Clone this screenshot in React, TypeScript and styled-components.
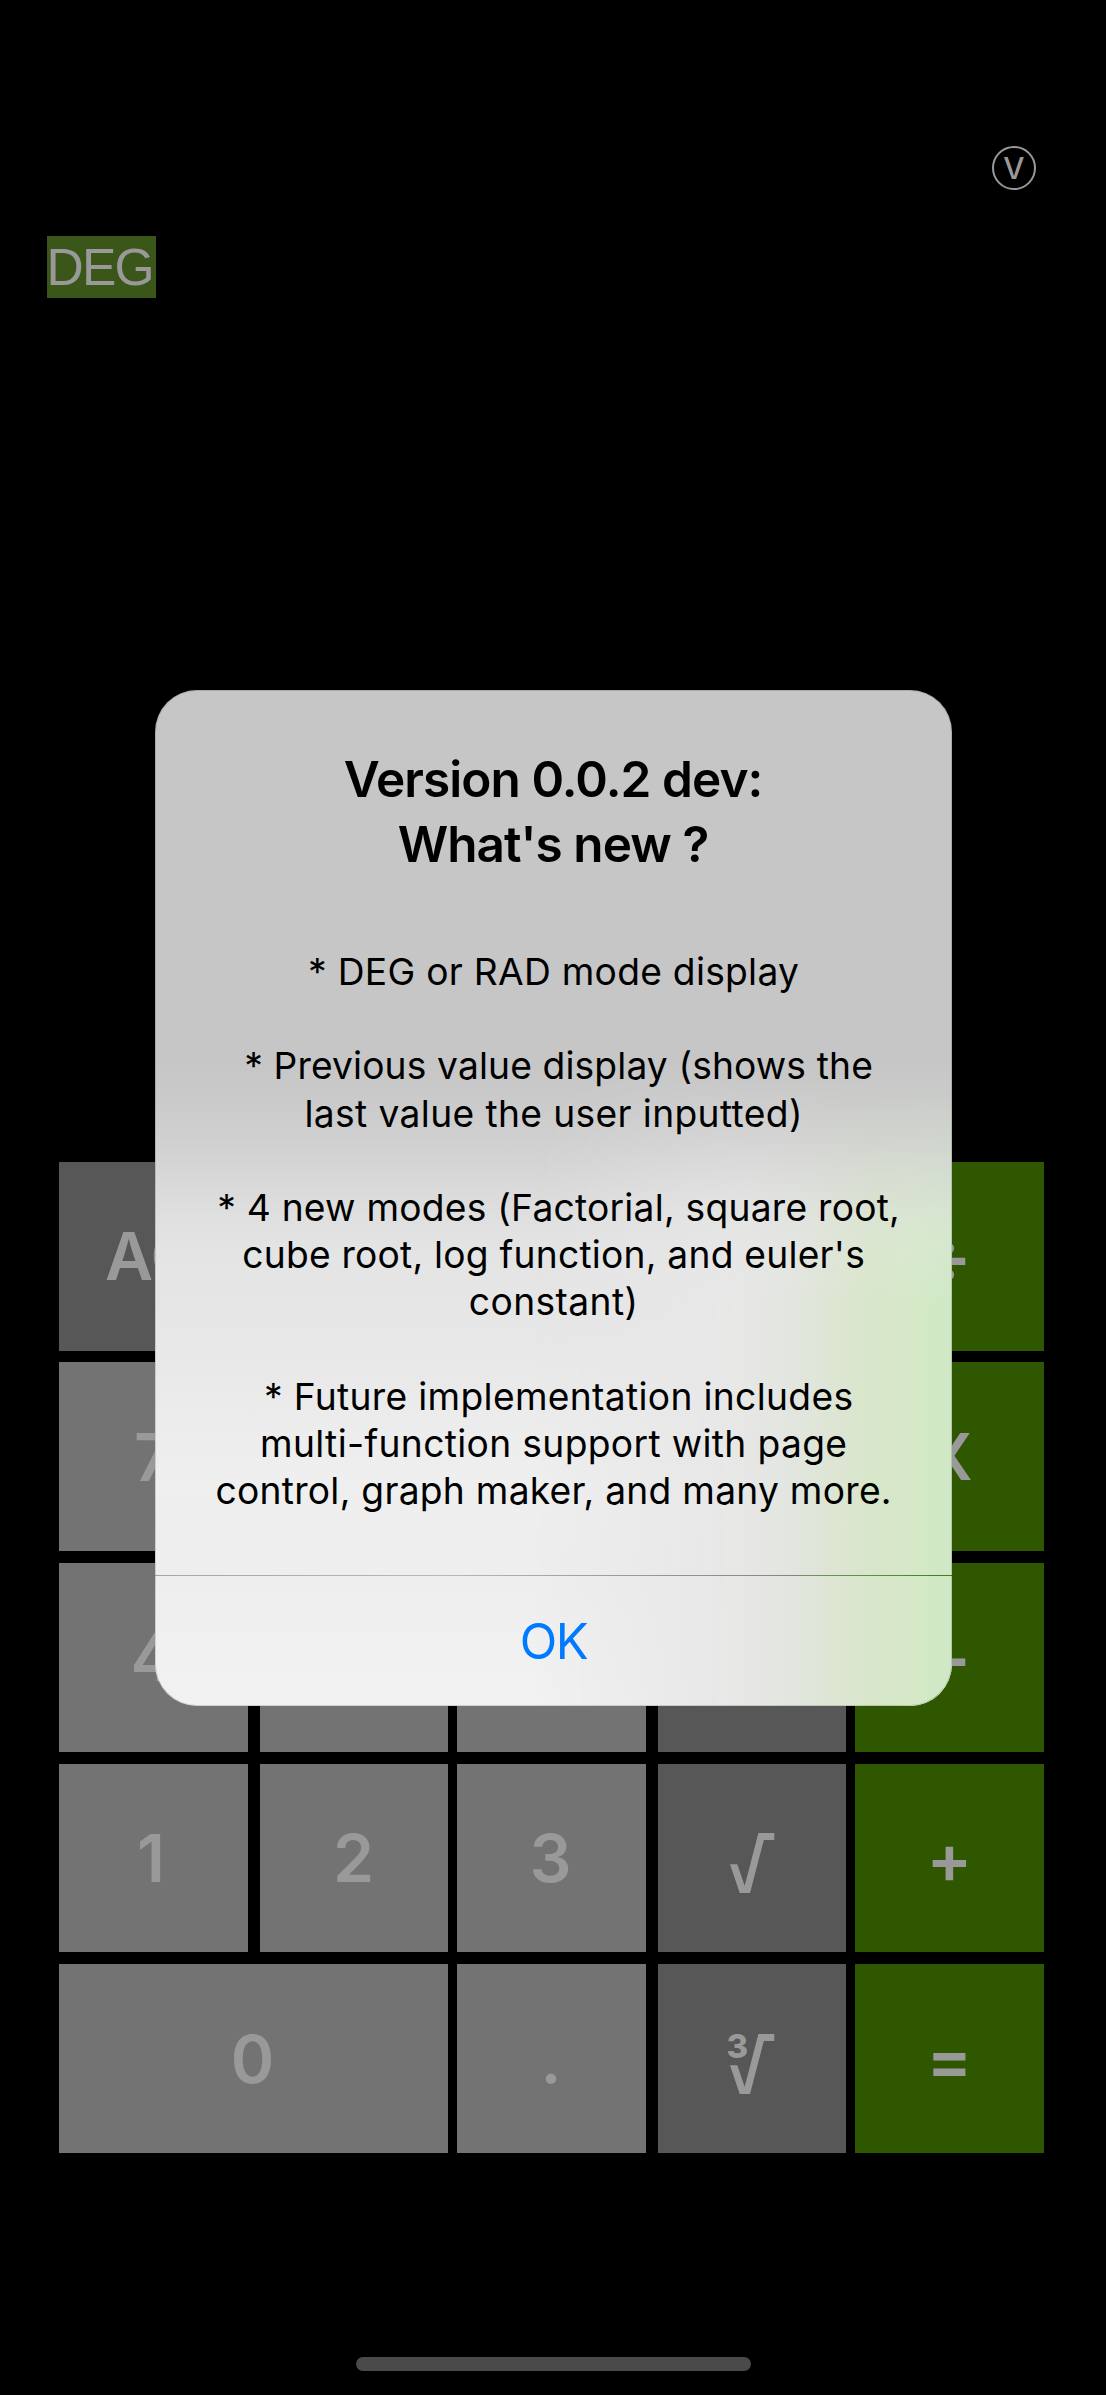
import React from "react";
import styled, { createGlobalStyle } from "styled-components";

const GlobalStyle = createGlobalStyle`
  * { box-sizing: border-box; }
  body { margin: 0; background: #000; }
`;

const Screen = styled.main`
  position: relative;
  display: flex;
  flex-direction: column;
  width: 1106px;
  height: 2395px;
  overflow: hidden;
  background: #000;
  color: #999;
  font-family: Inter, Roboto, sans-serif;
`;

const TopBar = styled.header`
  display: flex;
  justify-content: flex-end;
  padding: 146px 70px 0 0;
`;

const VersionBadge = styled.button`
  display: flex;
  align-items: center;
  justify-content: center;
  width: 44px;
  height: 44px;
  padding: 0;
  border: 2px solid #999;
  border-radius: 50%;
  background: none;
  color: inherit;
  font: 500 30px/40px Inter, sans-serif;
`;

const Display = styled.section`
  flex: 1;
  padding: 46px 47px 0;
`;

const AngleMode = styled.div`
  width: 109px;
  height: 62px;
  background: #3a5719;
  font: 400 51.5px/62px "Liberation Sans", Arial, sans-serif;
  letter-spacing: -1.8px;
  text-indent: -0.5px;
  white-space: nowrap;
`;

const Keypad = styled.section`
  display: grid;
  grid-template-columns: 189px 188px 189px 188px 189px;
  grid-auto-rows: 188.8px;
  row-gap: 11.8px;
  margin-left: 59px;
`;

const Row = styled.div`
  display: flex;
  grid-column: 1 / -1;
  gap: 9px;
`;

const Pair = styled.div`
  display: flex;
  gap: 12px;
  width: 389px;
  flex: none;

  & > :last-child:not(:first-child) { width: 188px; }
`;

type Tone = "digit" | "func" | "op";
const tones: Record<Tone, string> = { digit: "#737373", func: "#575757", op: "#2f5700" };

const Key = styled.button<{ $tone: Tone; $size?: number; $wide?: boolean; $nudge?: number }>`
  display: flex;
  flex: none;
  align-items: center;
  justify-content: center;
  width: ${(p) => (p.$wide ? "389px" : "189px")};
  height: 188.8px;
  padding: 0 ${(p) => p.$nudge ?? 1}px 0 0;
  border: 0;
  border-radius: 0;
  background: ${(p) => tones[p.$tone]};
  color: #999;
  font: 600 ${(p) => p.$size ?? 66}px Inter, sans-serif;
`;

const RadicalBox = styled.span`
  position: relative;
  display: block;
  width: 45px;
  height: 60px;
  margin-top: 10px;

  svg { display: block; }
`;

const RootIndex = styled.span`
  position: absolute;
  left: -3px;
  top: -6px;
  font-size: 33px;
  font-weight: 800;
  line-height: 36px;
`;

const HomeIndicator = styled.div`
  flex: none;
  width: 395px;
  height: 14px;
  margin: 204px 0 24px 356px;
  border-radius: 7px;
  background: #4a4a4a;
`;

const Alert = styled.section`
  position: absolute;
  left: 155px;
  top: 690px;
  display: flex;
  flex-direction: column;
  width: 797px;
  height: 1016px;
  overflow: hidden;
  border-radius: 42px;
  background: linear-gradient(
    180deg,
    #c6c6c6 0,
    #c6c6c6 370px,
    #cacaca 410px,
    #d0d0d0 450px,
    #d8d8d8 490px,
    #dfdfdf 525px,
    #e4e4e4 560px,
    #e6e6e6 610px,
    #e8e8e8 670px,
    #ececec 730px,
    #efefef 790px,
    #eeeeee 870px,
    #f2f2f2 1016px
  );
  color: #000;
  text-align: center;

  &::before,
  &::after {
    content: "";
    position: absolute;
    inset: 0;
    pointer-events: none;
  }

  &::before {
    background: linear-gradient(
      90deg,
      rgba(230, 230, 230, 0) 380px,
      rgba(231, 231, 231, 0.9) 550px,
      #e7e7e6 590px,
      #e2e6df 640px,
      #dde5d3 680px,
      #d7e6c8 720px,
      #d6e8c8 748px,
      #d2e9c6 772px,
      #d0e8c6 797px
    );
    mask-image: linear-gradient(180deg, transparent 380px, rgba(0, 0, 0, 0.25) 460px, rgba(0, 0, 0, 0.6) 525px, #000 610px);
  }

  &::after {
    border-radius: inherit;
    box-shadow: inset 0 0 0 1px rgba(0, 0, 0, 0.14);
  }
`;

const AlertBody = styled.div`
  position: relative;
  display: flex;
  flex-direction: column;
  height: 885px;
  padding-top: 56.5px;
`;

/* A first line of a wrapped note sits slightly right of centre. */
const Line = styled.span<{ $tracking: number; $shift: number }>`
  display: block;
  padding-left: ${(p) => p.$shift * 2}px;
  letter-spacing: ${(p) => p.$tracking}px;
  margin-right: ${(p) => -p.$tracking}px;
  white-space: pre;
`;

const AlertTitle = styled.h1`
  margin: 0;
  font-size: 49.5px;
  font-weight: 600;
  line-height: 65px;
`;

const Message = styled.div`
  display: flex;
  flex-direction: column;
  gap: 47.2px;
  margin-top: 71.6px;
  font-size: 37.2px;
  line-height: 47.2px;
`;

const Note = styled.p`
  margin: 0;
`;

const AlertAction = styled.button`
  position: relative;
  flex: 1;
  padding: 1px 0 0;
  border: 0;
  border-top: 1px solid;
  border-image: linear-gradient(90deg, #a6a6a6, #b8b8b8 36%, #999 60%, #888b84 76%, #5c9345 89%, #35821a) 1;
  background: none;
  color: #007aff;
  font: 400 49px Inter, sans-serif;
  letter-spacing: -1.5px;
`;

const Radical = ({ index }: { index?: string }) => (
  <RadicalBox>
    <svg width="45" height="60" viewBox="0 0 45 60" fill="none">
      <clipPath id="radicalTrim">
        <path d="M0 31.3H16L22 0H45V60H0Z" />
      </clipPath>
      <path
        d="M2.4 27.5L15.1 65L31.1 3.5H44.3"
        stroke="#999"
        strokeWidth="7"
        strokeMiterlimit="12"
        clipPath="url(#radicalTrim)"
      />
    </svg>
    {index && <RootIndex>{index}</RootIndex>}
  </RadicalBox>
);

type TextLine = [text: string, tracking: number, shift?: number];

const title: TextLine[] = [
  ["Version 0.0.2 dev:", -0.92],
  ["What's new ?", -0.93],
];

const notes: TextLine[][] = [
  [["* DEG or RAD mode display", 0.27]],
  [
    ["* Previous value display (shows the", 0.13, 5],
    ["last value the user inputted)", 0.37],
  ],
  [
    ["* 4 new modes (Factorial, square root,", 0.235, 5],
    ["cube root, log function, and euler's", 0.22],
    ["constant)", 0.4],
  ],
  [
    ["* Future implementation includes", 0.32, 5],
    ["multi-function support with page", 0.34],
    ["control, graph maker, and many more.", 0.26, -0.5],
  ],
];

const renderLines = (lines: TextLine[]) =>
  lines.map(([text, tracking, shift = 0]) => (
    <Line key={text} $tracking={tracking} $shift={shift}>
      {text}
    </Line>
  ));

export default function App() {
  return (
    <>
      <GlobalStyle />
      <Screen>
        <TopBar>
          <VersionBadge>V</VersionBadge>
        </TopBar>
        <Display>
          <AngleMode>DEG</AngleMode>
        </Display>
        <Keypad>
          <Row>
            <Pair>
              <Key $tone="func" $nudge={3}>AC</Key>
              <Key $tone="func" />
            </Pair>
            <Pair>
              <Key $tone="func" />
              <Key $tone="func" />
            </Pair>
            <Key $tone="op" $size={68}>÷</Key>
          </Row>
          <Row>
            <Pair>
              <Key $tone="digit">7</Key>
              <Key $tone="digit" />
            </Pair>
            <Pair>
              <Key $tone="digit" />
              <Key $tone="func" />
            </Pair>
            <Key $tone="op" $size={64} $nudge={0}>X</Key>
          </Row>
          <Row>
            <Pair>
              <Key $tone="digit" $nudge={2}>4</Key>
              <Key $tone="digit" />
            </Pair>
            <Pair>
              <Key $tone="digit" />
              <Key $tone="func" />
            </Pair>
            <Key $tone="op" $size={68}>−</Key>
          </Row>
          <Row>
            <Pair>
              <Key $tone="digit" $nudge={5}>1</Key>
              <Key $tone="digit">2</Key>
            </Pair>
            <Pair>
              <Key $tone="digit" $nudge={2}>3</Key>
              <Key $tone="func" $nudge={0}>
                <Radical />
              </Key>
            </Pair>
            <Key $tone="op" $size={68} $nudge={0}>+</Key>
          </Row>
          <Row>
            <Pair>
              <Key $tone="digit" $wide $nudge={2}>0</Key>
            </Pair>
            <Pair>
              <Key $tone="digit">.</Key>
              <Key $tone="func" $nudge={0}>
                <Radical index="3" />
              </Key>
            </Pair>
            <Key $tone="op" $size={68} $nudge={0}>=</Key>
          </Row>
        </Keypad>
        <HomeIndicator />
        <Alert role="alertdialog">
          <AlertBody>
            <AlertTitle>{renderLines(title)}</AlertTitle>
            <Message>
              {notes.map((lines) => (
                <Note key={lines[0][0]}>{renderLines(lines)}</Note>
              ))}
            </Message>
          </AlertBody>
          <AlertAction>OK</AlertAction>
        </Alert>
      </Screen>
    </>
  );
}
